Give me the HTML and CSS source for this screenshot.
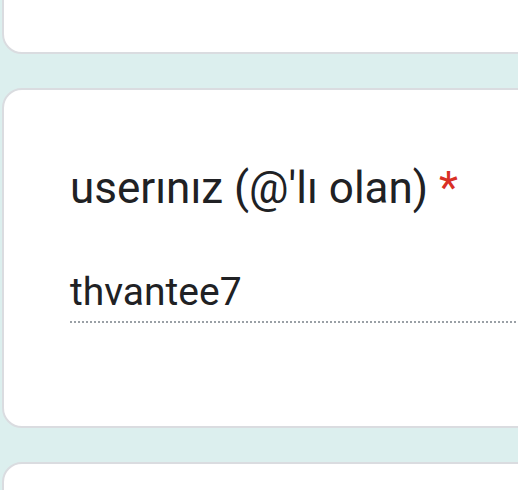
FILE: index.html
```html
<!DOCTYPE html>
<html lang="tr">
<head>
    <meta charset="UTF-8">
    <meta name="viewport" content="width=device-width, initial-scale=1.0">
    <title>Form</title>
    <link rel="stylesheet" href="styles.css">
</head>
<body>
    <div class="form">
        <div class="card card-prev"></div>

        <div class="card question">
            <div class="question-title">
                userınız (@'lı olan) <span class="required">*</span>
            </div>
            <div class="answer">thvantee7</div>
        </div>

        <div class="card card-next"></div>
    </div>
</body>
</html>
```

FILE: styles.css
```css
body {
    margin: 0;
    overflow: hidden;
    background: #dcefee;
    font-family: Roboto, 'Noto Sans', sans-serif;
    color: #202124;
}

.form {
    display: flex;
    flex-direction: column;
    gap: 34px;
    margin-top: -60px;
}

.card {
    margin: 0 -40px 0 2px;
    background: #fff;
    border: 2px solid #dadce0;
    border-radius: 20px;
}

.card-prev {
    height: 110px;
}

.card-next {
    height: 120px;
}

.question {
    padding: 73px 0 0 66px;
    height: 263px;
}

.question-title {
    font-size: 44px;
    line-height: 50px;
}

.required {
    color: #d93025;
}

.answer {
    margin-top: 57px;
    margin-right: 40px;
    font-size: 39px;
    line-height: 44px;
    padding-bottom: 7px;
    border-bottom: 2px dotted #9aa0a6;
}
```
